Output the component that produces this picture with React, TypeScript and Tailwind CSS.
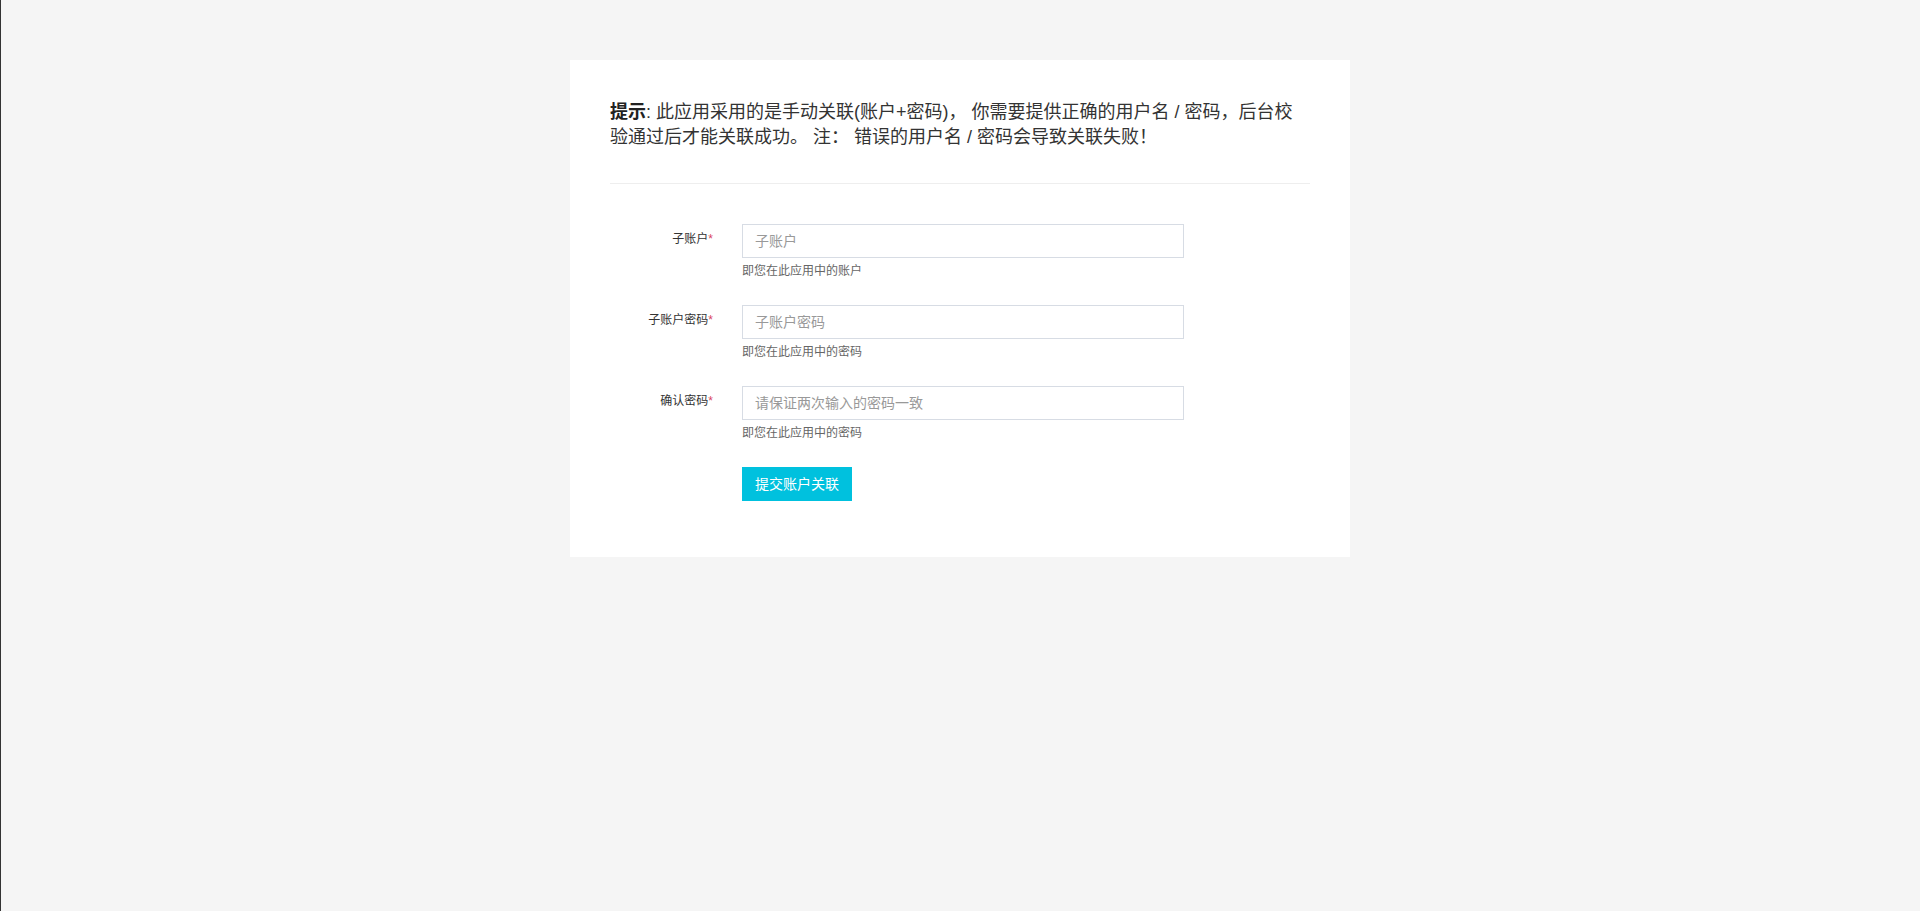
const font = "font-['Liberation_Sans','Noto_Sans_CJK_SC',sans-serif]";

interface FieldProps {
  label: string;
  placeholder: string;
  help: string;
  type?: string;
}

const Field = ({ label, placeholder, help, type = "text" }: FieldProps) => {
  return (
    <div className="flex mb-[25px]">
      <label className="w-[132px] shrink-0 pr-[29px] pt-[6px] text-right text-[12px] leading-[18px] text-[#333]">
        {label}
        <span className="text-[#d9455f]">*</span>
      </label>
      <div className="flex flex-col">
        <input
          type={type}
          placeholder={placeholder}
          className="w-[442px] h-[34px] border border-[#d7dce4] bg-white px-[12px] text-[14px] text-[#333] placeholder:text-[#999] outline-none"
        />
        <p className="mt-[4px] text-[12px] leading-[18px] text-[#666]">{help}</p>
      </div>
    </div>
  );
};

export default function App() {
  return (
    <div className={`min-h-screen bg-[#f5f5f5] border-l border-[#333] pt-[60px] ${font}`}>
      <div className="w-[780px] ml-[569px] bg-white px-[40px] pt-[40px] pb-[56px]">
        {/* Notice */}
        <p className="text-[18px] leading-[25px] text-[#333]">
          <strong className="font-bold text-[#222]">提示</strong>: 此应用采用的是手动关联(账户+密码)， 你需要提供正确的用户名 / 密码，后台校验通过后才能关联成功。 注： 错误的用户名 / 密码会导致关联失败！
        </p>
        <div className="mt-[33px] h-px bg-[#eeeeee]" />

        {/* Form */}
        <form className="pt-[40px]" onSubmit={(e) => e.preventDefault()}>
          <Field label="子账户" placeholder="子账户" help="即您在此应用中的账户" />
          <Field label="子账户密码" placeholder="子账户密码" help="即您在此应用中的密码" type="password" />
          <Field label="确认密码" placeholder="请保证两次输入的密码一致" help="即您在此应用中的密码" type="password" />
          <div className="pl-[132px]">
            <button
              type="submit"
              className="w-[110px] h-[34px] bg-[#00c1de] text-white text-[14px]"
            >
              提交账户关联
            </button>
          </div>
        </form>
      </div>
    </div>
  );
}
